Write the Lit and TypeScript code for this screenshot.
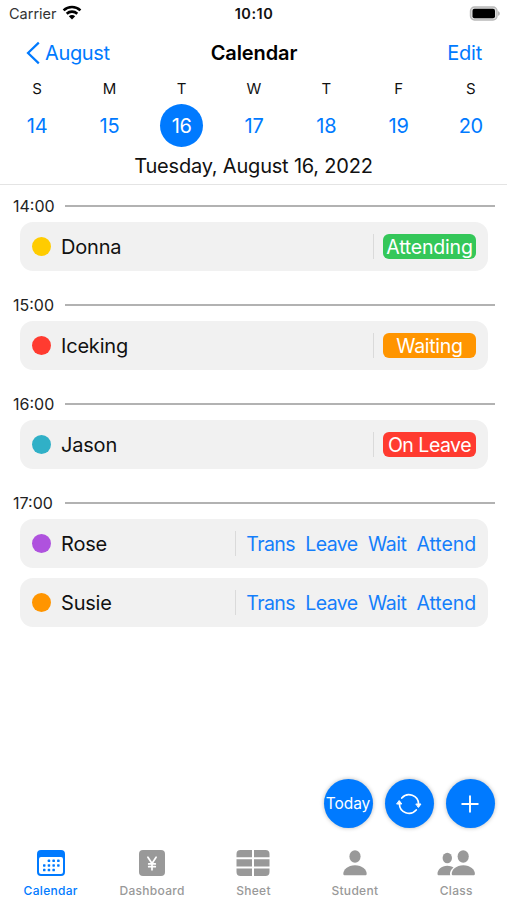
import { LitElement, html, css, svg } from "lit";
import { customElement } from "lit/decorators.js";

interface Student {
  name: string;
  color: string;
  status?: { label: string; kind: string };
}

interface Slot {
  time: string;
  students: Student[];
}

const DAYS = [
  ["S", "14"], ["M", "15"], ["T", "16"], ["W", "17"], ["T", "18"], ["F", "19"], ["S", "20"],
];
const SELECTED = "16";

const SLOTS: Slot[] = [
  { time: "14:00", students: [{ name: "Donna", color: "#ffcc00", status: { label: "Attending", kind: "attending" } }] },
  { time: "15:00", students: [{ name: "Iceking", color: "#ff3b30", status: { label: "Waiting", kind: "waiting" } }] },
  { time: "16:00", students: [{ name: "Jason", color: "#30b0c7", status: { label: "On Leave", kind: "leave" } }] },
  { time: "17:00", students: [{ name: "Rose", color: "#af52de" }, { name: "Susie", color: "#ff9500" }] },
];

const DOTS = [[1, 0], [2, 0], [3, 0], [0, 1], [1, 1], [2, 1], [3, 1], [0, 2], [1, 2], [2, 2]];

const calendarIcon = html`<svg width="30" height="28" viewBox="0 0 30 28" fill="currentColor">
  <path fill-rule="evenodd" d="M5 1h20a4 4 0 0 1 4 4v18a4 4 0 0 1-4 4H5a4 4 0 0 1-4-4V5a4 4 0 0 1 4-4zM5 8a2 2 0 0 0-2 2v13a2 2 0 0 0 2 2h20a2 2 0 0 0 2-2V10a2 2 0 0 0-2-2z"/>
  ${DOTS.map(([c, r]) => svg`<rect x=${7 + c * 4.7} y=${10.6 + r * 4.6} width="2.5" height="2.5" rx="0.6"/>`)}
</svg>`;

const yenIcon = html`<svg width="28" height="28" viewBox="0 0 28 28">
  <rect x="1" y="1" width="26" height="26" rx="4" fill="currentColor"/>
  <path d="M9.900 8.200l4.100 6.200 4.100-6.200M14 14.400v6.400M10.700 14.900h6.600M10.700 17.700h6.600" fill="none" stroke="#fff" stroke-width="1.700" stroke-linecap="round"/>
</svg>`;

const sheetIcon = html`<svg width="34" height="28" viewBox="0 0 34 28" fill="currentColor">
  <path d="M4.500 1H16v7.300H.5V5a4 4 0 0 1 4-4zM18 1h11.500a4 4 0 0 1 4 4v3.300H18zM.5 10.300H16v7.300H.5zM18 10.300h15.500v7.300H18zM.5 19.600H16V27H4.500a4 4 0 0 1-4-4zM18 19.600h15.500V23a4 4 0 0 1-4 4H18z"/>
</svg>`;

const studentIcon = html`<svg width="26" height="28" viewBox="0 0 26 28" fill="currentColor">
  <ellipse cx="13" cy="7.500" rx="5.600" ry="6.200"/>
  <path d="M3 26.300c-1 0-1.700-.5-1.700-1.500 0-4 4.500-8.500 11.700-8.500s11.700 4.500 11.700 8.500c0 1-.7 1.500-1.700 1.500z"/>
</svg>`;

const classIcon = html`<svg width="40" height="28" viewBox="0 0 40 28" fill="currentColor">
  <ellipse cx="11.300" cy="9" rx="4.700" ry="5.300"/>
  <path d="M3.200 26.300c-1.200 0-1.700-.6-1.700-1.600 0-3.700 3.800-8 9.800-8 2.400 0 4.500.7 6.200 1.800-2.300 1.900-3.500 4.200-3.500 6.300 0 .6.1 1 .3 1.500z"/>
  <ellipse cx="27.200" cy="7.500" rx="5.600" ry="6.200"/>
  <path d="M17.300 26.300c-1 0-1.600-.5-1.600-1.500 0-4 4.500-8.500 11.600-8.500s11.600 4.500 11.600 8.500c0 1-.7 1.500-1.700 1.500z"/>
</svg>`;

const TABS = [
  { label: "Calendar", icon: calendarIcon },
  { label: "Dashboard", icon: yenIcon },
  { label: "Sheet", icon: sheetIcon },
  { label: "Student", icon: studentIcon },
  { label: "Class", icon: classIcon },
];

@customElement("app-root")
export class AppRoot extends LitElement {
  static styles = css`
    :host {
      display: flex;
      flex-direction: column;
      height: 900px;
      width: 507px;
      overflow: hidden;
      background: #fff;
      color: #111;
      font-family: Inter, "Liberation Sans", sans-serif;
      font-size: 20px;
      line-height: 24px;
      letter-spacing: -0.2px;
      white-space: nowrap;
    }
    svg { display: block; flex: none; }
    .status, .nav {
      display: grid;
      grid-template-columns: 1fr auto 1fr;
      align-items: center;
      box-sizing: border-box;
    }
    .status { height: 27px; padding: 0 7px 0 9px; font-size: 14.500px; letter-spacing: 0; }
    .carrier { display: flex; align-items: center; gap: 5px; color: #333; }
    .carrier svg { margin-top: -2px; }
    .clock { font-weight: 600; letter-spacing: 0.5px; margin-right: 1px; }
    .battery { justify-self: end; }
    .nav { height: 51px; padding: 0 25px 0 26px; color: #007aff; }
    .back { display: flex; align-items: center; gap: 5px; letter-spacing: -0.35px; }
    .title { color: #000; font-weight: 600; letter-spacing: -0.1px; }
    .edit { justify-self: end; }
    .week { display: grid; grid-template-columns: repeat(7, 1fr); padding-left: 1px; }
    .day { display: flex; flex-direction: column; align-items: center; }
    .weekday { height: 22px; line-height: 22px; font-size: 15px; letter-spacing: 0; margin-bottom: 4px; }
    .date { width: 43px; height: 43px; line-height: 45px; text-align: center; border-radius: 50%; color: #007aff; }
    .date.selected { background: #007aff; color: #fff; }
    .full-date { height: 37px; line-height: 38px; text-align: center; border-bottom: 1px solid #e4e4e4; }
    .slots { flex: 1; padding: 5px 12px 0 13px; }
    .slot { margin-bottom: 18px; }
    .hour { display: flex; align-items: center; height: 32px; font-size: 16px; letter-spacing: 0; color: #222; }
    .time { width: 51.500px; }
    .rule { flex: 1; height: 2px; background: #b2b2b2; }
    .cards { display: flex; flex-direction: column; gap: 10px; padding: 0 7px; }
    .card {
      display: flex;
      align-items: center;
      height: 49px;
      box-sizing: border-box;
      padding: 0 12px;
      border-radius: 13px;
      background: #f1f1f1;
    }
    .dot { width: 19px; height: 19px; border-radius: 50%; margin-right: 10px; }
    .name { flex: 1; }
    .divider { width: 1px; height: 25px; background: #dadada; margin-right: 9px; }
    .badge { width: 93px; height: 25px; line-height: 26px; border-radius: 6px; color: #fff; text-align: center; font-size: 19.500px; }
    .attending { background: #34c759; }
    .waiting { background: #ff9500; letter-spacing: -0.3px; }
    .leave { background: #ff3b30; letter-spacing: -0.5px; }
    .actions { display: flex; gap: 10px; color: #147efb; padding-left: 1px; font-size: 19.500px; }
    .trans-action, .leave-action { letter-spacing: -0.6px; margin-right: 0.4px; }
    .wait-action { letter-spacing: -0.4px; }
    .attend-action { letter-spacing: -0.1px; }
    .fabs { display: flex; justify-content: flex-end; gap: 12px; padding-right: 12.500px; height: 49px; }
    .fab {
      display: flex;
      align-items: center;
      justify-content: center;
      width: 49px;
      height: 49px;
      border-radius: 50%;
      background: #007aff;
      color: #fff;
      font-size: 15.500px;
      letter-spacing: -0.05px;
      box-shadow: 0 0 4px rgba(0, 0, 0, 0.28);
    }
    .tabs { display: grid; grid-template-columns: repeat(5, 1fr); height: 72px; box-sizing: border-box; padding-top: 21px; }
    .tab {
      display: flex;
      flex-direction: column;
      align-items: center;
      color: #999;
      font-size: 12px;
      line-height: 14px;
      font-weight: 500;
      letter-spacing: 0.3px;
      gap: 7px;
    }
    .tab.active { color: #007aff; }
  `;

  private renderStudent(s: Student) {
    return html`<div class="card">
      <span class="dot" style="background:${s.color}"></span>
      <span class="name">${s.name}</span>
      <span class="divider"></span>
      ${s.status
        ? html`<span class="badge ${s.status.kind}">${s.status.label}</span>`
        : html`<span class="actions">${["Trans", "Leave", "Wait", "Attend"].map((a) => html`<span class="${a.toLowerCase()}-action">${a}</span>`)}</span>`}
    </div>`;
  }

  render() {
    return html`
      <div class="status">
        <span class="carrier"><span>Carrier</span>
          <svg width="20" height="15" viewBox="0 0 20 15" fill="none" stroke="#000" stroke-width="2.600">
            <path d="M1.600 5.400C6.300.9 13.700.9 18.400 5.400"/>
            <path d="M4.700 8.700c3-2.800 7.600-2.800 10.600 0"/>
            <path d="M10 14.500l-3.200-3.300c1.800-1.600 4.600-1.600 6.400 0z" fill="#000" stroke="none"/>
          </svg>
        </span>
        <span class="clock">10:10</span>
        <svg class="battery" width="31" height="15" viewBox="0 0 31 15">
          <rect x="1.500" y="1" width="26.500" height="13" rx="4" fill="#ddd" stroke="#b9b9b9" stroke-width="1.400"/>
          <rect x="3.500" y="2.700" width="22.500" height="9.600" rx="2" fill="#000"/>
          <path d="M29.200 5.200c2 .6 2 4 0 4.600z" fill="#aaa"/>
        </svg>
      </div>
      <div class="nav">
        <span class="back">
          <svg width="14" height="24" viewBox="0 0 14 24" fill="none" stroke="#007aff" stroke-width="2.200"><path d="M12.800 1.600L2 12l10.800 10.400"/></svg>
          <span>August</span>
        </span>
        <span class="title">Calendar</span>
        <span class="edit">Edit</span>
      </div>
      <div class="week">
        ${DAYS.map(([w, d]) => html`<div class="day">
          <span class="weekday">${w}</span>
          <span class="date ${d === SELECTED ? "selected" : ""}">${d}</span>
        </div>`)}
      </div>
      <div class="full-date">Tuesday, August 16, 2022</div>
      <div class="slots">
        ${SLOTS.map((slot) => html`<div class="slot">
          <div class="hour"><span class="time">${slot.time}</span><span class="rule"></span></div>
          <div class="cards">${slot.students.map((s) => this.renderStudent(s))}</div>
        </div>`)}
      </div>
      <div class="fabs">
        <span class="fab">Today</span>
        <span class="fab">
          <svg width="26" height="22" viewBox="0 0 26 22" fill="none" stroke="#fff" stroke-width="1.700" stroke-linecap="round">
            <path d="M5.800 5A9.600 9.600 0 0 1 22.600 11M20.200 17A9.600 9.600 0 0 1 3.400 11"/>
            <path d="M20.200 11h4.800l-2.400 3.200zM1 11h4.800L3.400 7.800z" fill="#fff" stroke-width="1" stroke-linejoin="round"/>
          </svg>
        </span>
        <span class="fab">
          <svg width="18" height="18" viewBox="0 0 18 18" stroke="#fff" stroke-width="1.900" stroke-linecap="round"><path d="M9 1.200v15.600M1.200 9h15.600"/></svg>
        </span>
      </div>
      <div class="tabs">
        ${TABS.map((t, i) => html`<div class="tab ${i === 0 ? "active" : ""}">${t.icon}<span>${t.label}</span></div>`)}
      </div>
    `;
  }
}
